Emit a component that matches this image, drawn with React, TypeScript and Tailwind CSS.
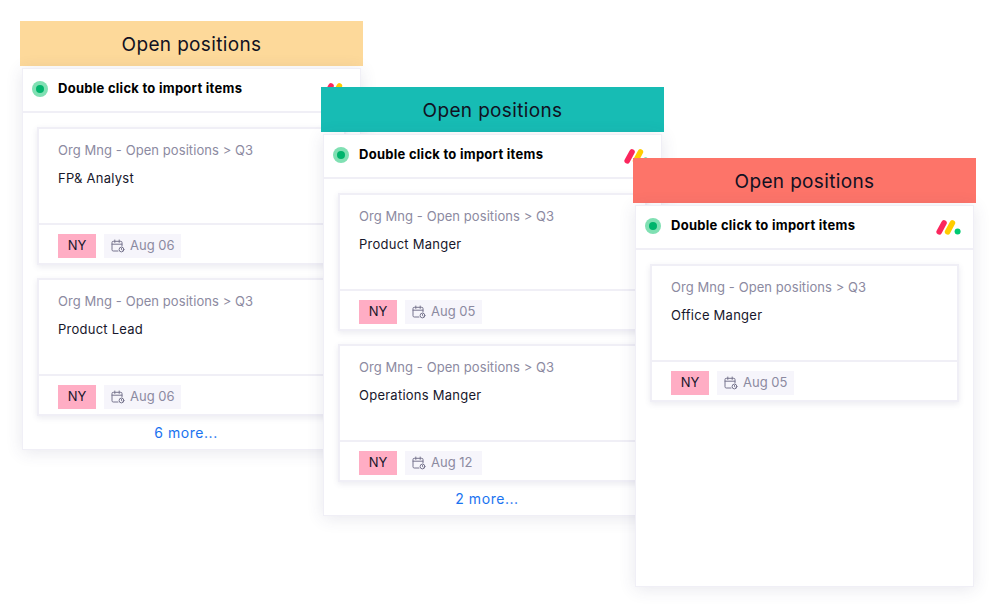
interface Item {
  title: string;
  date: string;
}

interface BoardProps {
  className: string;
  headerClass: string;
  items: Item[];
  more?: string;
}

function CalendarIcon() {
  return (
    <svg width="14" height="14" viewBox="0 0 14 14" fill="none" stroke="#77758e" strokeWidth="1" strokeLinecap="round" className="shrink-0">
      <path d="M7 12H2.200A1.200 1.200 0 0 1 1 10.800V3.500a1.200 1.200 0 0 1 1.200-1.200h7.600A1.200 1.200 0 0 1 11 3.500V7" />
      <path d="M1 5.200h10M3.800 1v2.400M8.200 1v2.400" />
      <circle cx="10.500" cy="10.500" r="2.400" />
      <path d="M10.500 9.500v1.100l.7.500" />
    </svg>
  );
}

function MondayLogo() {
  return (
    <svg width="25" height="16" viewBox="0 0 25 16" className="shrink-0 mt-[1px]">
      <path d="M3.200 12.800L8 4" stroke="#fb275d" strokeWidth="5.600" strokeLinecap="round" />
      <path d="M11.600 12.800L16.400 4" stroke="#ffcc00" strokeWidth="5.600" strokeLinecap="round" />
      <circle cx="21.600" cy="12.600" r="3" fill="#00ca72" />
    </svg>
  );
}

function JobCard({ title, date }: Item) {
  return (
    <div className="h-[138px] w-[309px] shrink-0 flex flex-col bg-white border-2 border-[#f0eff6] shadow-[0_2px_6px_rgba(60,60,110,0.1)]">
      <div className="flex-1 pl-[19px] pt-[12px]">
        <div className="text-[13px] leading-[18px] tracking-[0.07px] text-[#8c8aa1] whitespace-nowrap">Org Mng - Open positions &gt; Q3</div>
        <div className="mt-[10px] text-[13px] leading-[18px] tracking-[0.25px] text-[#17172b] whitespace-nowrap">{title}</div>
      </div>
      <div className="h-[40px] border-t-2 border-[#f0eff6] pl-[19px] pt-[9px] flex gap-[8px]">
        <div className="w-[38px] h-[24px] bg-[#ffadc4] flex items-center justify-center text-[13px] text-[#17172b]">NY</div>
        <div className="w-[77px] h-[24px] bg-[#f6f5fb] flex items-center gap-[5px] pl-[7px] text-[13px] text-[#8c8aa1] whitespace-nowrap">
          <CalendarIcon />
          {date}
        </div>
      </div>
    </div>
  );
}

function Board({ className, headerClass, items, more }: BoardProps) {
  return (
    <div className={`absolute w-[343px] ${className}`}>
      <div className={`h-[45px] pt-[4px] flex items-center justify-center text-[19px] tracking-[0.35px] text-[#111122] ${headerClass}`}>Open positions</div>
      <div className="mx-[2px] mt-[2px] h-[382px] bg-white border border-[#f0eff6] shadow-[0_2px_16px_rgba(60,60,110,0.12)] flex flex-col">
        <div className="h-[44px] shrink-0 border-b-2 border-[#f0eff6] flex items-center pl-[9px] pr-[12px] pb-[2px]">
          <span className="w-[16px] h-[16px] rounded-full bg-[#80e0b3] flex items-center justify-center">
            <span className="w-[8px] h-[8px] rounded-full bg-[#00b46c]" />
          </span>
          <span className="ml-[10px] flex-1 text-[13px] font-bold tracking-[0.27px] text-black whitespace-nowrap">Double click to import items</span>
          <MondayLogo />
        </div>
        <div className="pl-[14px] pt-[14px] flex flex-col gap-[13px]">
          {items.map((item) => (
            <JobCard key={item.title} {...item} />
          ))}
        </div>
        {more && (
          <div className="mt-[7px] pr-[11px] text-center text-[14px] leading-[20px] tracking-[0.55px] text-[#1a73f0]">{more}</div>
        )}
      </div>
    </div>
  );
}

export default function App() {
  return (
    <div className="relative w-[996px] h-[607px] overflow-hidden bg-white font-['Inter','Liberation_Sans',sans-serif]">
      <Board
        className="left-[20px] top-[21px]"
        headerClass="bg-[#fdd99a]"
        items={[
          { title: "FP& Analyst", date: "Aug 06" },
          { title: "Product Lead", date: "Aug 06" },
        ]}
        more="6 more..."
      />
      <Board
        className="left-[321px] top-[87px]"
        headerClass="bg-[#17bcb4]"
        items={[
          { title: "Product Manger", date: "Aug 05" },
          { title: "Operations Manger", date: "Aug 12" },
        ]}
        more="2 more..."
      />
      <Board
        className="left-[633px] top-[158px]"
        headerClass="bg-[#fd7469]"
        items={[{ title: "Office Manger", date: "Aug 05" }]}
      />
    </div>
  );
}
